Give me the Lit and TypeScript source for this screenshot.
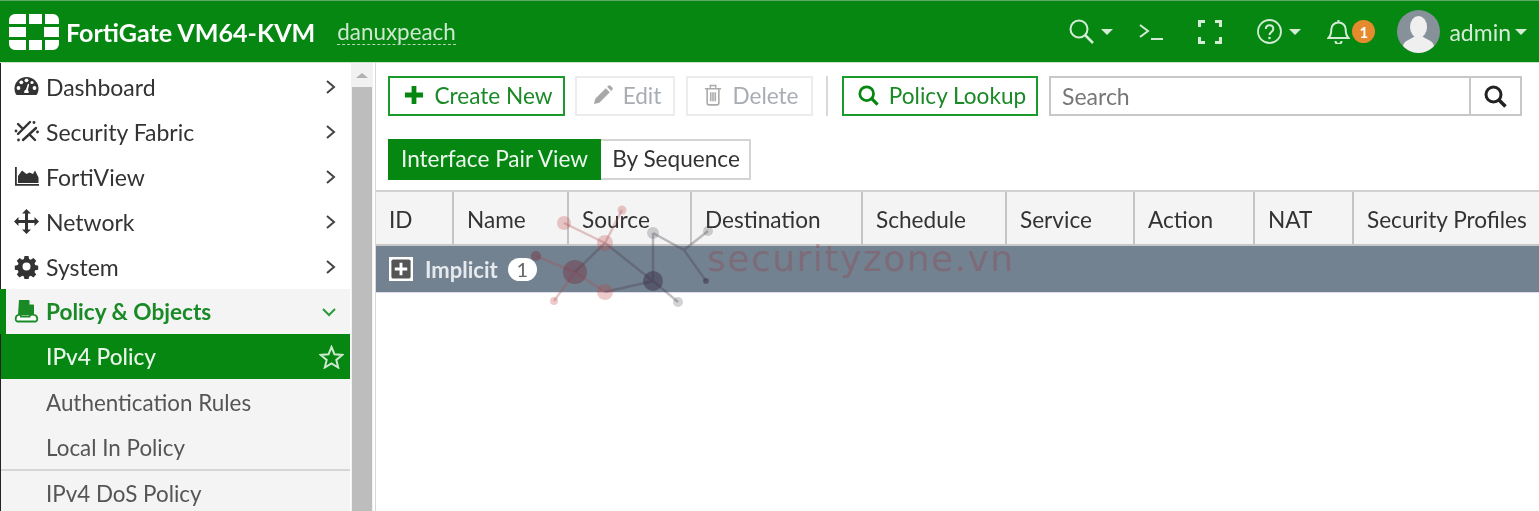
import { LitElement, html, css, svg } from "lit";
import { customElement } from "lit/decorators.js";

const chev = html`<svg class="chev" viewBox="0 0 12 16"><path d="M2 2l7 6-7 6" fill="none" stroke="currentColor" stroke-width="2"/></svg>`;

const icons = {
  dashboard: html`<svg class="ic" viewBox="0 0 25 25"><path fill="#333" d="M12.500 3C5.600 3 .5 8.300 .5 14.500c0 2.300.6 4.300 1.700 6l.5.5h19.600l.5-.5c1.100-1.700 1.700-3.700 1.700-6C24.500 8.300 19.400 3 12.500 3z"/><g fill="#fff"><circle cx="4.500" cy="14" r="1.900"/><circle cx="7.300" cy="8.300" r="1.900"/><circle cx="12.500" cy="6.300" r="1.900"/><circle cx="20.500" cy="14" r="1.900"/><circle cx="18" cy="8.500" r="1.600"/><path d="M10.300 19c-.5-1.600.5-3 1.600-3.200l2-6 1.300.4-1.400 6.100c1 .7 1.200 1.800.7 2.700z"/></g></svg>`,
  fabric: html`<svg class="ic" viewBox="0 0 25 25"><g stroke="#333" stroke-width="2.400" stroke-linecap="round" fill="none"><path d="M4 15L16 3M9 21l13-12M4 5l5 5M16 16l5 5"/></g><g fill="#333"><circle cx="20" cy="3.500" r="1.400"/><circle cx="2" cy="12" r="1.400"/><circle cx="23.500" cy="13" r="1.400"/><circle cx="4.500" cy="21" r="1.400"/></g></svg>`,
  fortiview: html`<svg class="ic" viewBox="0 0 25 25"><path fill="#333" d="M1 3h1.800v17H25v1.800H1z"/><path fill="#333" d="M4 19v-7l4-5.500 4.500 3.500 3-1.500 3.500 1.500 2-3.500 3.500 7V19z"/></svg>`,
  network: html`<svg class="ic" viewBox="0 0 25 25"><path fill="#333" d="M12.500 0l4.500 4.500h-3v6.500h6.500V8l4.500 4.500-4.500 4.500v-3H14v6.500h3L12.500 25 8 20.500h3V14H4.500v3L0 12.500 4.500 8v3H11V4.500H8z"/></svg>`,
  system: html`<svg class="ic" viewBox="0 0 25 25"><path fill="#333" fill-rule="evenodd" d="M10.500 2h4l.6 3 1.700.7 2.600-1.700 2.800 2.800-1.700 2.600.7 1.700 3 .6v4l-3 .6-.7 1.700 1.700 2.600-2.800 2.800-2.600-1.700-1.700.7-.6 3h-4l-.6-3-1.700-.7-2.600 1.700-2.800-2.800 1.700-2.600-.7-1.700-3-.6v-4l3-.6.700-1.700-1.700-2.600 2.800-2.800 2.600 1.700 1.700-.7zM12.500 8.500a4 4 0 100 8 4 4 0 000-8z"/></svg>`,
  policy: html`<svg class="ic" viewBox="0 0 25 25"><path fill="#1a8a26" d="M5 1h10l5 5v10H4z"/><path fill="#f4f4f4" d="M15.500 1v4.500H20z"/><path fill="#fff" stroke="#1a8a26" stroke-width="1.800" d="M4 16c-3 1-3 6.500-.5 6.500h18c2.500 0 2.500-5.500-1-6.500-2-.5-5-.5-5 1.500H7c0-1.500-1-2-3-1.500z"/></svg>`,
};

const marks = svg`
  <g stroke-width="2.500" fill="none">
    <path stroke="rgba(170,75,80,.3)" d="M188 12L229 32M246 -1L229 32M160 45L199 61L178 90M199 61L229 81"/>
    <path stroke="rgba(70,55,75,.32)" d="M229 32L199 61M229 32L277 70L229 81M277 22V70L302 91M277 22L308 39L332 20M308 39L330 70"/>
  </g>
  <g fill="rgba(190,70,70,.28)">
    <circle cx="188" cy="12" r="7"/><circle cx="246" cy="-1" r="4.500"/><circle cx="229" cy="32" r="8"/>
    <circle cx="229" cy="81" r="8"/><circle cx="178" cy="90" r="4"/>
  </g>
  <g fill="rgba(115,60,76,.5)"><circle cx="160" cy="45" r="5"/><circle cx="199" cy="61" r="12"/></g>
  <g fill="rgba(70,70,80,.24)"><circle cx="277" cy="22" r="6"/><circle cx="332" cy="20" r="5"/><circle cx="302" cy="91" r="5"/></g>
  <g fill="rgba(50,40,65,.45)"><circle cx="277" cy="70" r="10"/><circle cx="330" cy="70" r="3"/></g>
  <text x="331" y="60" class="wm">securityzone.vn</text>
`;

@customElement("app-root")
export class AppRoot extends LitElement {
  static styles = css`
    :host { display: block; width: 1539px; height: 511px; overflow: hidden; position: relative; background: #fff;
      font-family: Lato, "Open Sans", sans-serif; font-size: 23px; color: #333; filter: blur(.35px); }
    * { box-sizing: border-box; }
    svg { display: block; flex: none; }

    .top { height: 63px; background: #058711; border-top: 1px solid #5fa866; border-bottom: 1px solid #cfe3d1; display: flex; align-items: center; padding-left: 9px; color: #fff; }
    .logo { width: 50px; height: 36px; margin-right: 7px; }
    .brand { font-weight: 700; font-size: 25.100px; margin-right: 22px; }
    .vdom { font-size: 22.400px; color: #cfe8d0; border-bottom: 1px dashed #b5d6b8; line-height: 25px; }
    .tools { margin-left: auto; display: flex; align-items: center; height: 100%; color: #d4ecd6; padding-right: 12px; }
    .caret { width: 0; height: 0; border: 6px solid transparent; border-top: 6px solid currentColor; border-bottom: 0; margin-left: 7px; }
    .t1 { display: flex; align-items: center; margin-right: 26px; }
    .t2 { margin-right: 35px; }
    .t3 { margin-right: 35px; }
    .t4 { display: flex; align-items: center; margin-right: 26px; }
    .bell { display: flex; align-items: center; margin-right: 22px; }
    .badge { width: 23px; height: 23px; border-radius: 50%; background: #e68a2e; color: #fff; font-size: 15px; font-weight: 700; display: flex; align-items: center; justify-content: center; margin-left: 2px; }
    .avatar { width: 43px; height: 43px; margin-right: 9px; }
    .user { display: flex; align-items: center; font-size: 23px; }
    .user .caret { margin-left: 4px; }

    .main { display: flex; height: 448px; }
    .side { width: 350px; flex: none; border-left: 1px solid #222; padding-top: 1px; }
    .row { height: 45px; display: flex; align-items: center; padding-left: 13px; padding-right: 13px; color: #333; }
    .row .ic { width: 25px; height: 25px; margin-right: 7px; }
    .row span { flex: 1; }
    .chev { width: 12px; height: 16px; color: #444; }
    .pol { background: #f4f4f4; color: #1a8a26; font-weight: 700; font-size: 22.600px; border-left: 6px solid #058711; padding-left: 8px; margin-left: -1px; }
    .pol .chev { width: 16px; height: 12px; color: #2a9a3a; }
    .sub { background: #f4f4f4; padding: 1px 13px 0 45px; color: #555; font-size: 22.400px; }
    .cur { background: #058711; color: #e8f5e9; font-weight: 500; font-size: 22.600px; padding: 0 6px 0 45px; }
    .sep { border-top: 2px solid #d6d6d6; }

    .bar { width: 22px; flex: none; margin-left: 1px; background: #f1f1f1; display: flex; flex-direction: column; align-items: center; padding-top: 10px; }
    .up { width: 0; height: 0; border: 6px solid transparent; border-bottom: 5px solid #b0b0b0; border-top: 0; margin-bottom: 9px; }
    .thumb { flex: 1; width: 20px; background: #bdbdbd; }
    .content { flex: 1; margin-left: 2px; border-left: 1px solid #d8d8d8; min-width: 0; position: relative; }

    .tb { display: flex; align-items: center; padding: 13px 0 0 12px; height: 53px; }
    .btn { height: 40px; display: flex; align-items: center; justify-content: center; font-size: 22.600px; gap: 10px; padding: 0 0 2px 4px; }
    .green { border: 2px solid #1c9a2c; color: #1a8a26; }
    .off { border: 2px solid #ececec; color: #a8adb4; }
    .b1 { width: 177px; margin-right: 10px; }
    .b2 { width: 100px; margin-right: 11px; }
    .b3 { width: 127px; margin-right: 13px; }
    .vr { width: 2px; height: 40px; background: #d8d8d8; margin-right: 14px; }
    .b4 { width: 196px; margin-right: 11px; color: #1a8a26; }
    .search { width: 473px; height: 40px; display: flex; border: 2px solid #c8c8c8; }
    .search div { flex: 1; color: #777; padding-left: 11px; line-height: 36px; }
    .search b { width: 51px; border-left: 2px solid #c8c8c8; display: flex; align-items: center; justify-content: center; }

    .tabs { display: flex; margin: 23px 0 10px 12px; height: 41px; font-size: 22.600px; }
    .tab { height: 41px; display: flex; align-items: center; justify-content: center; padding-bottom: 2px; }
    .t-on { width: 213px; background: #058711; color: #eef7ef; }
    .t-off { width: 150px; border: 2px solid #d4d4d4; border-left: 0; color: #333; padding-left: 2px; }

    .head { display: flex; height: 56px; background: #f4f4f4; border-top: 2px solid #d0d0d0; border-bottom: 2px solid #c8c8c8; font-size: 22.600px; }
    .col { display: flex; align-items: center; padding: 2px 0 0 13px; border-right: 2px solid #c4c4c4; white-space: nowrap; overflow: hidden; }
    .col:last-child { border-right: 0; flex: 1; }
    .group { height: 47px; background: #738290; border-bottom: 1px solid #dde; display: flex; align-items: center; padding-left: 13px; color: #e6eaee; font-weight: 700; font-size: 22px; }
    .plus { width: 24px; height: 24px; margin-right: 12px; }
    .count { width: 29px; height: 23px; border-radius: 12px; background: #fff; color: #666; font-size: 20px; font-weight: 400; display: flex; align-items: center; justify-content: center; margin-left: 10px; }

    .mark { position: absolute; left: 376px; top: 211px; width: 660px; height: 120px; pointer-events: none; overflow: visible; }
    .wm { font-family: "DejaVu Sans", sans-serif; font-size: 36px; letter-spacing: 1.500px; fill: rgba(150,50,60,.28); }
  `;

  render() {
    const cols: [string, number][] = [["ID", 78], ["Name", 115], ["Source", 123], ["Destination", 171], ["Schedule", 144], ["Service", 128], ["Action", 120], ["NAT", 99], ["Security Profiles", 0]];
    return html`
      <header class="top">
        <svg class="logo" viewBox="0 0 50 36"><g fill="#fff">
          <path d="M6 0h11v10H0V6a6 6 0 016-6zM20 0h13v10H20zM36 0h8a6 6 0 016 6v4H36z"/>
          <path d="M0 13h17v10H0zM35 13h15v10H35z"/>
          <path d="M0 26h17v10H6a6 6 0 01-6-6zM20 26h13v10H20zM36 26h14v4a6 6 0 01-6 6h-8z"/>
        </g></svg>
        <div class="brand">FortiGate VM64-KVM</div>
        <div class="vdom">danuxpeach</div>
        <div class="tools">
          <div class="t1"><svg width="25" height="25" viewBox="0 0 25 25"><circle cx="10" cy="10" r="8.500" fill="none" stroke="currentColor" stroke-width="2"/><path d="M16 16l8 8" stroke="currentColor" stroke-width="2.500"/></svg><i class="caret"></i></div>
          <svg class="t2" width="24" height="16" viewBox="0 0 24 16"><path d="M1 1l8 6-8 6" fill="none" stroke="currentColor" stroke-width="2"/><path d="M12 15h12" stroke="currentColor" stroke-width="2"/></svg>
          <svg class="t3" width="24" height="24" viewBox="0 0 24 24"><path d="M7 1.500H1.500V7M17 1.500h5.500V7M7 22.500H1.500V17M17 22.500h5.500V17" fill="none" stroke="currentColor" stroke-width="3"/></svg>
          <div class="t4"><svg width="25" height="25" viewBox="0 0 25 25"><circle cx="12.500" cy="12.500" r="11.500" fill="none" stroke="currentColor" stroke-width="1.800"/><path d="M8.800 10c0-5 7.500-5 7.500 0 0 3-3.800 3-3.800 6" fill="none" stroke="currentColor" stroke-width="2"/><circle cx="12.500" cy="19" r="1.300" fill="currentColor"/></svg><i class="caret"></i></div>
          <div class="bell"><svg width="23" height="25" viewBox="0 0 23 25"><path d="M1.500 19c2.500-2.500 2.800-5 2.800-8.500 0-4 3-7 7.200-7s7.200 3 7.200 7c0 3.500.3 6 2.800 8.500zM11.500 1v2.500M8.500 22a3 3 0 006 0" fill="none" stroke="currentColor" stroke-width="2"/></svg><div class="badge">1</div></div>
          <svg class="avatar" viewBox="0 0 43 43"><circle cx="21.500" cy="21.500" r="21.500" fill="#87919a"/><ellipse cx="21.500" cy="17" rx="8.500" ry="11" fill="#efefef"/><path d="M6 36c1-6 9-7 12-10h7c3 3 11 4 12 10-4 4-9 7-15.500 7S10 40 6 36z" fill="#efefef"/></svg>
          <div class="user">admin<i class="caret"></i></div>
        </div>
      </header>
      <div class="main">
        <nav class="side">
          <div class="row">${icons.dashboard}<span>Dashboard</span>${chev}</div>
          <div class="row">${icons.fabric}<span>Security Fabric</span>${chev}</div>
          <div class="row">${icons.fortiview}<span>FortiView</span>${chev}</div>
          <div class="row">${icons.network}<span>Network</span>${chev}</div>
          <div class="row">${icons.system}<span>System</span>${chev}</div>
          <div class="row pol">${icons.policy}<span>Policy &amp; Objects</span><svg class="chev" viewBox="0 0 16 12"><path d="M2 3l6 6 6-6" fill="none" stroke="currentColor" stroke-width="2"/></svg></div>
          <div class="row sub cur"><span>IPv4 Policy</span><svg width="25" height="24" viewBox="0 0 25 24"><path d="M12.500 2l3 7.300 7.800.6-6 5 1.900 7.600-6.700-4.100-6.700 4.100 1.900-7.600-6-5 7.800-.6z" fill="none" stroke="#cfe8d0" stroke-width="2"/></svg></div>
          <div class="row sub"><span>Authentication Rules</span></div>
          <div class="row sub"><span>Local In Policy</span></div>
          <div class="row sub sep"><span>IPv4 DoS Policy</span></div>
        </nav>
        <div class="bar"><i class="up"></i><div class="thumb"></div></div>
        <section class="content">
          <div class="tb">
            <div class="btn green b1"><svg width="20" height="20" viewBox="0 0 21 21"><path d="M8 1h5v7h7v5h-7v7H8v-7H1V8h7z" fill="#058711"/></svg>Create New</div>
            <div class="btn off b2"><svg width="20" height="20" viewBox="0 0 22 22"><path d="M1 21l1.500-6L14 3.500l4.500 4.500L7 19.500zM15.500 2l1-1c1-1 2-1 3 0l1.500 1.500c1 1 1 2 0 3l-1 1z" fill="#a8a8a8"/></svg>Edit</div>
            <div class="btn off b3"><svg width="18" height="22" viewBox="0 0 20 24"><path d="M1 5h18M7 4V1.500h6V4M3.500 6v15c0 1 .8 2 2 2h9c1.200 0 2-1 2-2V6M7.500 9v10M10 9v10M12.500 9v10" fill="none" stroke="#ababab" stroke-width="1.800"/></svg>Delete</div>
            <div class="vr"></div>
            <div class="btn green b4"><svg width="21" height="21" viewBox="0 0 23 23"><circle cx="9.500" cy="9.500" r="7.500" fill="none" stroke="#058711" stroke-width="3"/><path d="M15 15l6.500 6.500" stroke="#058711" stroke-width="3.500"/></svg>Policy Lookup</div>
            <div class="search"><div>Search</div><b><svg width="23" height="23" viewBox="0 0 23 23"><circle cx="9.500" cy="9.500" r="7.500" fill="none" stroke="#222" stroke-width="3"/><path d="M15 15l6.500 6.500" stroke="#222" stroke-width="3.500"/></svg></b></div>
          </div>
          <div class="tabs"><div class="tab t-on">Interface Pair View</div><div class="tab t-off">By Sequence</div></div>
          <div class="head">${cols.map(([n, w]) => html`<div class="col" style=${w ? `width:${w}px` : ""}>${n}</div>`)}</div>
          <div class="group">
            <svg class="plus" viewBox="0 0 25 25"><rect width="25" height="25" fill="#fff"/><rect x="2.500" y="2.500" width="20" height="20" rx="2" fill="#555"/><path d="M11 6h3v5h5v3h-5v5h-3v-5H6v-3h5z" fill="#fff"/></svg>
            Implicit<div class="count">1</div>
          </div>
        </section>
      </div>
      <svg class="mark" viewBox="0 0 660 120">${marks}</svg>
    `;
  }
}
